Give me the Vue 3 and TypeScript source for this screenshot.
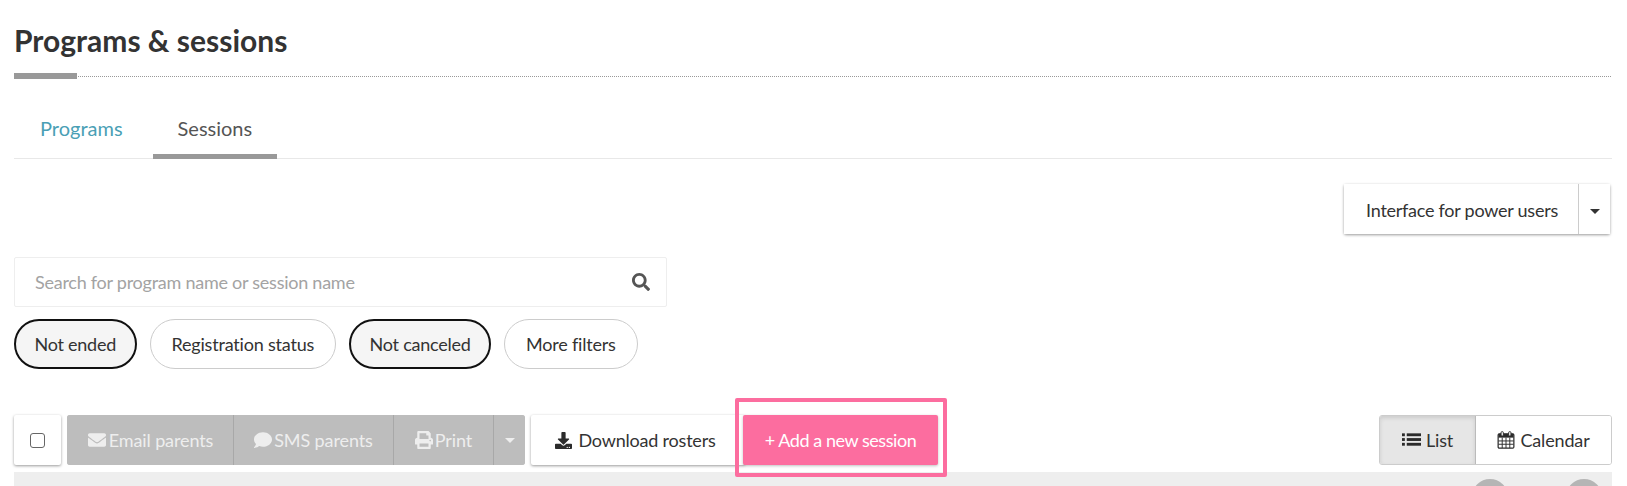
<script setup lang="ts">
const tabs = [
  { label: "Programs", active: false },
  { label: "Sessions", active: true },
];
const filters = [
  { label: "Not ended", on: true },
  { label: "Registration status", on: false },
  { label: "Not canceled", on: true },
  { label: "More filters", on: false },
];
</script>

<template>
  <div class="page">
    <h1 class="title">Programs &amp; sessions</h1>
    <div class="rule"><span class="rule-bar"></span></div>

    <div class="tabs">
      <a v-for="t in tabs" :key="t.label" class="tab" :class="{ active: t.active }">{{ t.label }}</a>
    </div>

    <div class="power-row">
      <div class="power">
        <button class="power-main">Interface for power users</button>
        <button class="power-caret"><span class="caret"></span></button>
      </div>
    </div>

    <div class="search">
      <span class="search-text">Search for program name or session name</span>
      <svg class="search-icon" viewBox="0 0 512 512"><path fill="#555" d="M505 442.7L405.3 343c-4.5-4.5-10.6-7-17-7H372c27.6-35.3 44-79.7 44-128C416 93.1 322.9 0 208 0S0 93.1 0 208s93.1 208 208 208c48.3 0 92.7-16.4 128-44v16.3c0 6.4 2.5 12.5 7 17l99.7 99.7c9.4 9.4 24.6 9.4 33.9 0l28.3-28.3c9.4-9.4 9.4-24.6.1-34zM208 336c-70.7 0-128-57.2-128-128 0-70.7 57.2-128 128-128 70.7 0 128 57.2 128 128 0 70.7-57.2 128-128 128z"/></svg>
    </div>

    <div class="filters">
      <button v-for="f in filters" :key="f.label" class="pill" :class="{ on: f.on }">{{ f.label }}</button>
    </div>

    <div class="toolbar">
      <div class="check-box"><span class="check"></span></div>

      <div class="bulk">
        <button class="bulk-btn email">
          <svg class="ic" viewBox="0 0 512 512"><path fill="currentColor" d="M502.3 190.8c3.9-3.1 9.7-.2 9.7 4.7V400c0 26.5-21.5 48-48 48H48c-26.5 0-48-21.5-48-48V195.6c0-5 5.7-7.8 9.7-4.7 22.4 17.4 52.1 39.5 154.1 113.6 21.1 15.4 56.7 47.8 92.2 47.6 35.7.3 72-32.8 92.3-47.6 102-74.1 131.6-96.3 154-113.7zM256 320c23.2.4 56.6-29.2 73.4-41.4 132.7-96.3 142.8-104.7 173.4-128.7 5.8-4.5 9.2-11.5 9.2-18.9v-19c0-26.5-21.5-48-48-48H48C21.5 64 0 85.5 0 112v19c0 7.4 3.4 14.3 9.2 18.9 30.6 23.9 40.7 32.4 173.4 128.7 16.8 12.2 50.2 41.8 73.4 41.4z"/></svg>Email parents
        </button>
        <button class="bulk-btn sms">
          <svg class="ic" viewBox="0 0 512 512"><path fill="currentColor" d="M256 32C114.6 32 0 125.1 0 240c0 49.6 21.4 95 57 130.7C44.5 421.1 2.7 466 2.2 466.5c-2.2 2.3-2.8 5.7-1.5 8.7S4.8 480 8 480c66.3 0 116-31.8 140.6-51.4 32.7 12.3 69 19.4 107.4 19.4 141.4 0 256-93.1 256-208S397.4 32 256 32z"/></svg>SMS parents
        </button>
        <button class="bulk-btn print">
          <svg class="ic" viewBox="0 0 512 512"><path fill="currentColor" d="M448 192V77.25c0-8.49-3.37-16.62-9.37-22.63L393.37 9.37c-6-6-14.14-9.37-22.63-9.37H96C78.33 0 64 14.33 64 32v160c-35.35 0-64 28.65-64 64v112c0 8.84 7.16 16 16 16h48v96c0 17.67 14.33 32 32 32h320c17.67 0 32-14.33 32-32v-96h48c8.84 0 16-7.16 16-16V256c0-35.35-28.65-64-64-64zm-64 256H128v-96h256v96zm0-224H128V64h192v48c0 8.84 7.16 16 16 16h48v96zm48 72c-13.25 0-24-10.75-24-24 0-13.26 10.75-24 24-24s24 10.74 24 24c0 13.25-10.75 24-24 24z"/></svg>Print
        </button>
        <button class="bulk-btn more"><span class="caret light"></span></button>
      </div>

      <button class="download">
        <svg class="ic dl" viewBox="0 0 512 512"><path fill="#2b2b2b" d="M216 0h80c13.3 0 24 10.7 24 24v168h87.7c17.8 0 26.7 21.5 14.1 34.1L269.7 378.3c-7.5 7.5-19.8 7.5-27.3 0L90.1 226.1c-12.6-12.6-3.7-34.1 14.1-34.1H192V24c0-13.3 10.7-24 24-24zm296 376v112c0 13.3-10.7 24-24 24H24c-13.3 0-24-10.7-24-24V376c0-13.3 10.7-24 24-24h146.7l49 49c20.1 20.1 52.5 20.1 72.6 0l49-49H488c13.3 0 24 10.7 24 24zm-124 88c0-11-9-20-20-20s-20 9-20 20 9 20 20 20 20-9 20-20zm64 0c0-11-9-20-20-20s-20 9-20 20 9 20 20 20 20-9 20-20z"/></svg>Download rosters
      </button>

      <div class="add-wrap">
        <button class="add">+ Add a new session</button>
        <span class="highlight"></span>
      </div>

      <div class="views">
        <button class="view active">
          <svg class="ic list" viewBox="0 0 20 16">
            <g fill="#2b2b2b">
              <rect x="0" y="1" width="3" height="3" /><rect x="5" y="1" width="15" height="3" />
              <rect x="0" y="6" width="3" height="3" /><rect x="5" y="6" width="15" height="3" />
              <rect x="0" y="11" width="3" height="3" /><rect x="5" y="11" width="15" height="3" />
            </g>
          </svg>List
        </button>
        <button class="view">
          <svg class="ic cal" viewBox="0 0 18 19">
            <rect x="0.7" y="3" width="16.6" height="15" rx="1.2" fill="none" stroke="#2b2b2b" stroke-width="1.3" />
            <rect x="1" y="3" width="16" height="4" fill="#2b2b2b" />
            <path d="M5 7v11M9 7v11M13 7v11M1 10.5h16M1 14h16" stroke="#2b2b2b" stroke-width="1" fill="none" />
            <rect x="3.8" y="0.7" width="2.4" height="4.6" rx="1" fill="#fff" stroke="#2b2b2b" stroke-width="1" />
            <rect x="11.8" y="0.7" width="2.4" height="4.6" rx="1" fill="#fff" stroke="#2b2b2b" stroke-width="1" />
          </svg>Calendar
        </button>
      </div>
    </div>

    <div class="strip">
      <span class="dot one"></span>
      <span class="dot two"></span>
    </div>
  </div>
</template>

<style>
html,
body {
  margin: 0;
  background: #fff;
  overflow: hidden;
}
</style>

<style scoped>
.page {
  height: 486px;
  overflow: hidden;
  padding: 0 15px 0 14px;
  font-family: Lato, sans-serif;
  color: #333;
  box-sizing: border-box;
}

button {
  font-family: inherit;
  cursor: pointer;
}

.title {
  margin: 0;
  padding-top: 22px;
  font-size: 30px;
  line-height: 36px;
  font-weight: 700;
  color: #333;
}

.rule {
  margin-top: 15px;
  height: 6px;
  background: linear-gradient(to right, #999 0, #999 1px, transparent 1px) 0 3px / 2px 1px repeat-x;
}

.rule-bar {
  display: block;
  width: 63px;
  height: 6px;
  background: #999;
}

.tabs {
  display: flex;
  margin-top: 25px;
  height: 55px;
  border-bottom: 1px solid #e8e8e8;
  box-sizing: border-box;
}

.tab {
  padding: 0 25px;
  font-size: 20px;
  line-height: 48px;
  color: #4a9fb5;
  height: 55px;
  box-sizing: border-box;
}

.tab:first-child {
  padding-left: 26px;
  margin-right: 5px;
}

.tab.active {
  color: #555;
  border-bottom: 5px solid #999;
}

.power-row {
  display: flex;
  justify-content: flex-end;
  padding-right: 2px;
  margin-top: 25px;
}

.power {
  display: flex;
  height: 50px;
  border-radius: 2px;
  box-shadow: 0 1px 3px rgba(0, 0, 0, 0.4);
}

.power-main,
.power-caret {
  border: 0;
  background: #fff;
  color: #333;
  font-size: 18px;
  letter-spacing: -0.25px;
  padding: 0;
}

.power-main {
  width: 235px;
  padding: 2px 0 0 2px;
  border-right: 1px solid #ccc;
}

.power-caret {
  width: 31px;
}

.caret {
  display: inline-block;
  border-top: 5px solid #333;
  border-left: 5px solid transparent;
  border-right: 5px solid transparent;
  vertical-align: middle;
}

.caret.light {
  border-top-color: #eee;
}

.search {
  display: flex;
  align-items: center;
  justify-content: space-between;
  width: 653px;
  height: 50px;
  margin-top: 23px;
  padding: 0 16px 0 20px;
  box-sizing: border-box;
  border: 1px solid #eee;
  border-radius: 2px;
}

.search-text {
  font-size: 18px;
  letter-spacing: -0.25px;
  color: #a3a3a3;
}

.search-icon {
  width: 18px;
  height: 18px;
}

.filters {
  display: flex;
  gap: 13px;
  margin-top: 12px;
}

.pill {
  height: 50px;
  padding: 0 21px;
  border: 1px solid #ccc;
  border-radius: 25px;
  background: #fff;
  color: #333;
  font-size: 18px;
  letter-spacing: -0.2px;
}

.pill.on {
  border: 2px solid #111;
  background: #f5f5f5;
  padding: 0 18.5px;
  letter-spacing: -0.25px;
}

.toolbar {
  display: flex;
  margin-top: 46px;
  height: 50px;
}

.check-box {
  display: flex;
  align-items: center;
  justify-content: center;
  width: 47px;
  height: 50px;
  background: #fff;
  border-radius: 2px;
  box-shadow: 0 1px 3px rgba(0, 0, 0, 0.4);
  box-sizing: border-box;
}

.check {
  width: 15px;
  height: 15px;
  box-sizing: border-box;
  border: 1px solid #666;
  border-radius: 3px;
}

.bulk {
  display: flex;
  margin-left: 6px;
  height: 50px;
  border-radius: 3px;
  overflow: hidden;
  background: #bdbdbd;
}

.bulk-btn {
  display: flex;
  align-items: center;
  justify-content: center;
  gap: 2px;
  border: 0;
  border-right: 1px solid #a8a8a8;
  background: #bdbdbd;
  color: #eee;
  font-size: 18px;
  letter-spacing: -0.1px;
  padding: 0;
  box-sizing: border-box;
}

.bulk-btn.email {
  width: 167px;
  gap: 3px;
  padding-left: 1px;
}

.bulk-btn.sms {
  width: 160px;
}

.bulk-btn.print {
  width: 100px;
}

.bulk-btn.more {
  width: 31px;
  border-right: 0;
}

.ic {
  width: 18px;
  height: 18px;
  flex: none;
}

.download {
  display: flex;
  align-items: center;
  gap: 6px;
  justify-content: center;
  width: 214px;
  height: 50px;
  margin-left: 6px;
  padding: 0 5px 0 0;
  border: 0;
  border-radius: 2px;
  background: #fff;
  color: #333;
  font-size: 18px;
  letter-spacing: -0.2px;
  box-shadow: 0 1px 3px rgba(0, 0, 0, 0.4);
}

.dl {
  width: 17px;
  height: 17px;
}

.add-wrap {
  position: relative;
  margin-left: -2px;
}

.add {
  width: 195px;
  height: 50px;
  border: 0;
  border-radius: 2px;
  background: #fc6d9f;
  color: #fff;
  font-size: 18px;
  letter-spacing: -0.45px;
  box-shadow: 0 1px 3px rgba(0, 0, 0, 0.25);
}

.highlight {
  position: absolute;
  z-index: 2;
  left: -8px;
  top: -17px;
  width: 212px;
  height: 79px;
  box-sizing: border-box;
  border: 4px solid #fc6d9f;
  border-radius: 2px;
  pointer-events: none;
}

.views {
  display: flex;
  margin-left: auto;
  height: 50px;
  border: 1px solid #ccc;
  border-radius: 3px;
  box-sizing: border-box;
  overflow: hidden;
}

.view {
  display: flex;
  align-items: center;
  justify-content: center;
  gap: 5px;
  border: 0;
  padding: 0;
  background: #fff;
  color: #333;
  font-size: 18px;
  letter-spacing: -0.15px;
  width: 135px;
}

.view.active {
  width: 96px;
  background: #e6e6e6;
  border-right: 1px solid #bbb;
  box-shadow: inset 0 2px 4px rgba(0, 0, 0, 0.12);
}

.list {
  width: 19px;
}

.strip {
  position: relative;
  height: 30px;
  margin-top: 7px;
  background: #eee;
}

.dot {
  position: absolute;
  top: 7px;
  width: 36px;
  height: 36px;
  border-radius: 50%;
  background: #b5b5b5;
}

.dot.one {
  left: 1458px;
}

.dot.two {
  left: 1552px;
}
</style>
